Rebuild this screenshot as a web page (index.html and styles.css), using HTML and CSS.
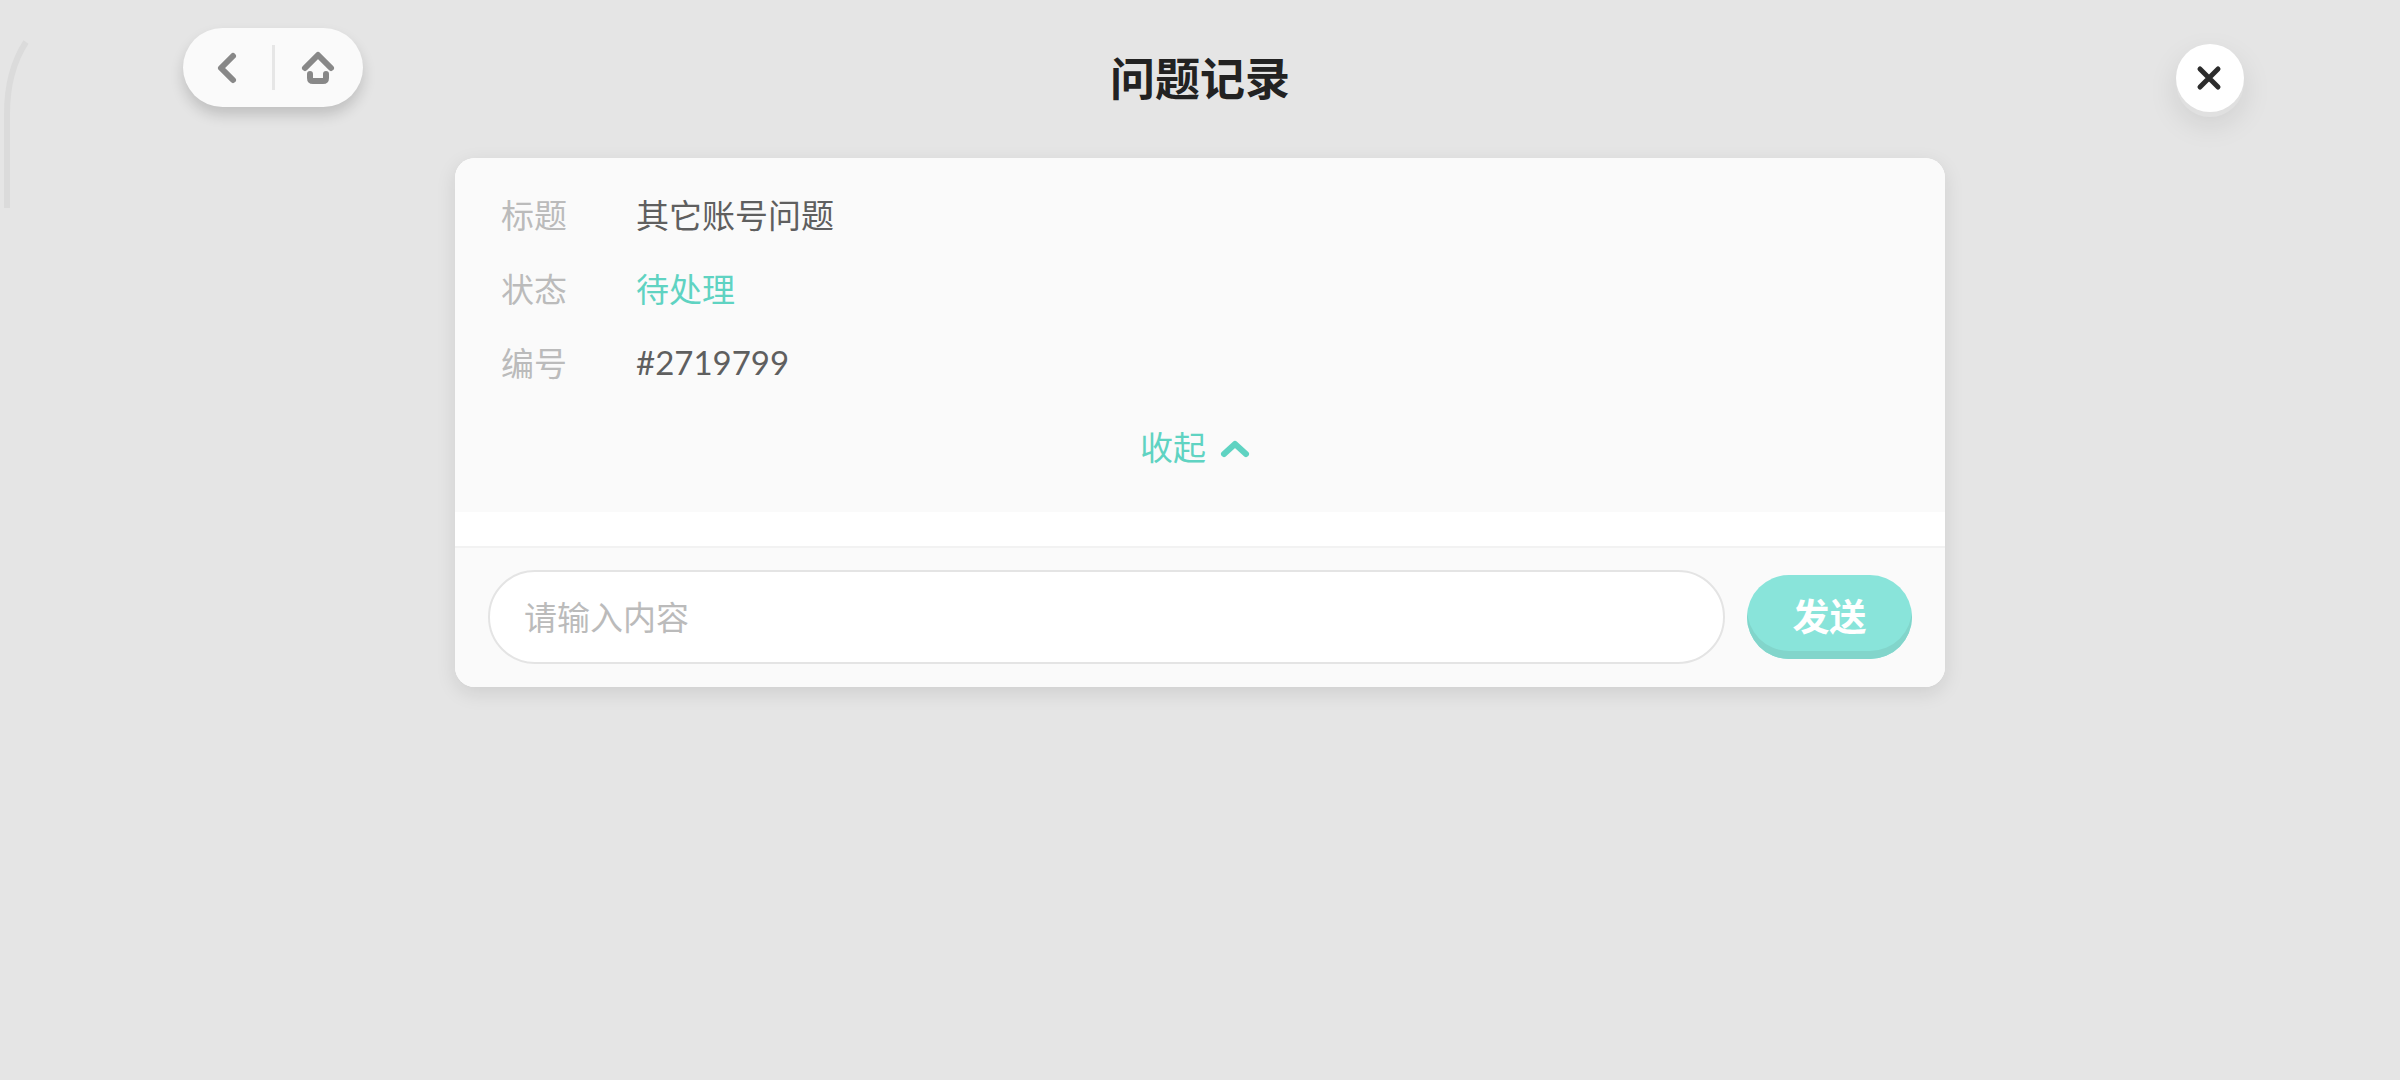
FILE: index.html
```html
<!DOCTYPE html>
<html lang="zh-CN">
<head>
    <meta charset="UTF-8">
    <meta name="viewport" content="width=device-width, initial-scale=1.0">
    <title>问题记录</title>
    <link rel="stylesheet" href="styles.css">
</head>
<body>
    <svg class="edge-line" width="32" height="212" viewBox="0 0 32 212" aria-hidden="true">
        <path d="M26 42C13 62 7 86 7 114V208" />
    </svg>

    <header class="header">
        <nav class="nav-pill">
            <button type="button" class="nav-button" aria-label="返回">
                <svg class="icon" width="40" height="40" viewBox="0 0 40 40">
                    <path d="M26 8L14 20L26 32" />
                </svg>
            </button>
            <a href="#" class="nav-button" aria-label="首页">
                <svg class="icon" width="40" height="40" viewBox="0 0 40 40">
                    <path d="M6 20L19 7L32 20" />
                    <path d="M11 26V30Q11 33 14 33H24Q27 33 27 30V26" />
                </svg>
            </a>
        </nav>
        <h1 class="title">问题记录</h1>
        <button type="button" class="close-button" aria-label="关闭">
            <svg class="icon" width="30" height="30" viewBox="0 0 30 30">
                <path d="M5 6L23 24M23 6L5 24" />
            </svg>
        </button>
    </header>

    <main class="card">
        <section class="details">
            <dl class="info">
                <dt>标题</dt>
                <dd>其它账号问题</dd>
                <dt>状态</dt>
                <dd class="pending">待处理</dd>
                <dt>编号</dt>
                <dd class="number">#2719799</dd>
            </dl>
            <button type="button" class="toggle">
                收起
                <svg class="icon" width="48" height="48" viewBox="0 0 48 48">
                    <path d="M12 32L23 22L34 32" />
                </svg>
            </button>
        </section>
        <div class="messages"></div>
        <form class="reply">
            <input type="text" class="reply-input" placeholder="请输入内容" aria-label="请输入内容">
            <button type="button" class="send-button">发送</button>
        </form>
    </main>
</body>
</html>
```
FILE: styles.css
```css
* {
    margin: 0;
    padding: 0;
    box-sizing: border-box;
}

body {
    min-height: 100vh;
    background: #e5e5e5;
    color: #5f5f5f;
    font-family: "Noto Sans CJK SC", sans-serif;
    font-size: 33px;
    line-height: 48px;
}

button,
input {
    border: none;
    background: none;
    font: inherit;
}

button {
    cursor: pointer;
}

.icon {
    display: block;
    fill: none;
    stroke: currentColor;
    stroke-width: 6;
    stroke-linecap: round;
    stroke-linejoin: round;
}

.edge-line {
    position: absolute;
    top: 0;
    left: 0;
    fill: none;
    stroke: #dbdbdb;
    stroke-width: 6;
}

/* header */
.header {
    display: grid;
    grid-template-columns: 1fr auto 1fr;
    align-items: center;
    height: 158px;
    padding: 28px 156px 30px;
}

.nav-pill {
    display: flex;
    align-self: start;
    justify-self: start;
    width: 180px;
    height: 79px;
    margin-left: 27px;
    padding: 17px 0;
    border-radius: 40px;
    background: #fafafa;
    box-shadow: 0 8px 14px rgba(0, 0, 0, 0.16);
}

.nav-button {
    display: flex;
    flex: 1;
    align-items: center;
    justify-content: center;
    color: #888;
}

.nav-button + .nav-button {
    border-left: 3px solid #e6e6e6;
}

.title {
    padding-bottom: 2px;
    color: #222;
    font-size: 45px;
    font-weight: 700;
    line-height: 64px;
}

.close-button {
    display: flex;
    align-items: center;
    justify-content: center;
    justify-self: end;
    width: 68px;
    height: 68px;
    border-radius: 50%;
    background: #fff;
    color: #2c2c2c;
    box-shadow: 0 5px 0 #e0e0e0, 0 12px 30px rgba(0, 0, 0, 0.1);
}

.close-button .icon {
    stroke-width: 5;
}

/* card */
.card {
    margin: 0 calc(19% - 1px);
    overflow: hidden;
    border-radius: 20px;
    background: #fff;
    box-shadow: 0 6px 20px rgba(0, 0, 0, 0.1);
}

.details {
    display: flex;
    flex-direction: column;
    align-items: center;
    gap: 36px;
    padding: 32px 46px 42px;
    background: #fafafa;
}

.info {
    display: grid;
    grid-template-columns: 135px 1fr;
    row-gap: 26px;
    width: 100%;
}

.info dt {
    color: #bbb;
}

.info .number {
    font-family: Lato, "Noto Sans CJK SC", sans-serif;
}

.info .pending,
.toggle {
    color: #5fd3c2;
}

.toggle {
    display: flex;
    align-items: center;
    gap: 6px;
}

.messages {
    min-height: 34px;
}

.reply {
    display: flex;
    align-items: center;
    gap: 22px;
    padding: 22px 33px 23px;
    border-top: 2px solid #f2f2f2;
    background: #fafafa;
}

.reply-input {
    flex: 1;
    min-width: 0;
    height: 94px;
    padding: 0 34px 2px;
    border: 2px solid #e4e4e4;
    border-radius: 47px;
    outline: none;
    background: #fff;
    color: #5f5f5f;
}

.reply-input::placeholder {
    color: #bbb;
    opacity: 1;
}

.send-button {
    width: 165px;
    height: 84px;
    padding-bottom: 4px;
    border-radius: 42px;
    background: #89e4da;
    color: #fff;
    font-size: 37px;
    font-weight: 700;
    box-shadow: inset 0 -8px 0 #82d5cb;
}
```
